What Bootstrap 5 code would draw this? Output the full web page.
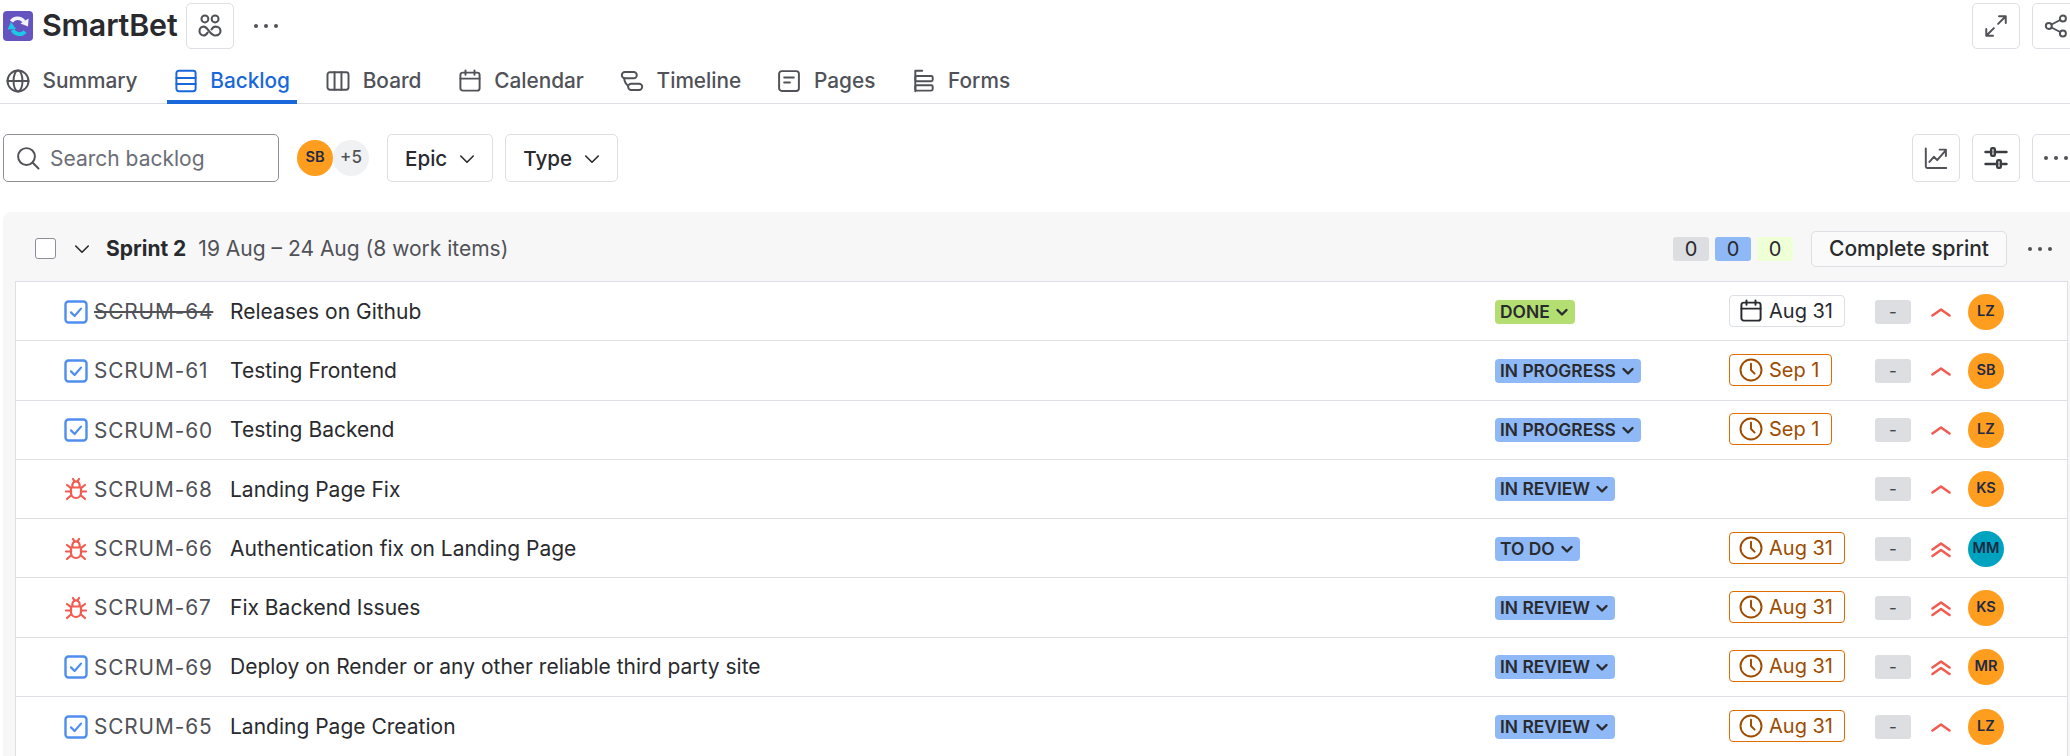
<!DOCTYPE html>
<html lang="en">
<head>
<meta charset="utf-8">
<title>SmartBet backlog</title>
<link href="https://cdn.jsdelivr.net/npm/bootstrap@5.3.0/dist/css/bootstrap.min.css" rel="stylesheet">
<script src="https://cdn.jsdelivr.net/npm/bootstrap@5.3.0/dist/js/bootstrap.bundle.min.js"></script>
<style>
html,body{height:756px;overflow:hidden}
body{font-family:Inter,"Liberation Sans",sans-serif;font-size:21px;color:#292a2e;background:#fff}
.ic{width:24px;height:24px;fill:none;stroke:currentColor;stroke-width:1.3;stroke-linecap:round;stroke-linejoin:round;flex:none}
.top-bar{height:52px;padding:3px 0 0 3px;margin-right:-10px}
.logo-box{width:30px;height:30px;margin:0 9px 0 0;flex:none}
.app-name{font-size:30.4px;font-weight:600;line-height:45px;letter-spacing:-.15px;margin-right:8px}
.sq-btn{width:48px;height:46px;padding:0;border:1.5px solid #dcdfe4;border-radius:5px;color:#505258;background:#fff;display:flex;align-items:center;justify-content:center}
.tall-btn{height:48px}
.dots{display:flex;gap:6px;align-items:center;justify-content:center}
.dots i{width:4px;height:4px;border-radius:50%;background:#505258;display:block}
.tab-strip{height:52px;border-bottom:1.5px solid #dcdfe4;padding-left:6px;gap:36.2px;align-items:flex-start}
.tab-item{display:flex;align-items:center;gap:12.5px;color:#505258;font-weight:500;font-size:20.8px;padding:10px 0 0;text-decoration:none;border-bottom:4px solid transparent;height:52px}
.tab-item.on{color:#1868db;border-bottom-color:#1868db;margin:0 -7px;padding:10px 7px 0}
.tool-row{padding:30px 0 0 3px;margin-right:-10px;height:108px;align-items:flex-start}
.search-box{width:276px;height:48px;border:1.5px solid #8c8f97;border-radius:5px;padding:0 12px;gap:10px;color:#505258}
.search-box input{border:0;padding:2px 0 0;font-size:21px;color:#505258;box-shadow:none;background:transparent}
.search-box input::placeholder{color:#6b6e76}
.av{width:36px;height:36px;border-radius:50%;background:#ff9d1f;color:#1f2a44;font-size:14.6px;font-weight:600;display:flex;align-items:center;justify-content:center;flex:none}
.av.teal{background:#00a3bf}
.av.more{background:#f0f1f2;color:#505258;font-size:17px;font-weight:500}
.drop-btn{height:48px;border:1.5px solid #dcdfe4;border-radius:5px;background:#fff;color:#292a2e;font-weight:500;font-size:20.6px;padding:2px 15px 0 17px;gap:10px;display:flex;align-items:center}
.people-gap{margin-left:18px;margin-top:6px}
.sprint-panel{background:#f7f7f7;margin-left:3px;border-radius:8px 0 0 0;padding:0 0 0 12px}
.sprint-head{height:69px;padding:4px 0 0 20px;align-items:center}
.tick{width:21px;height:21px;border:1.5px solid #8c8f97;border-radius:3px;background:#fff;flex:none}
.sprint-title{font-weight:700;font-size:21px;margin-left:14px}
.sprint-meta{color:#505258;font-size:21px;margin-left:12px}
.cnt{width:36px;height:24px;border-radius:3px;font-size:20px;font-weight:400;line-height:24px;text-align:center;color:#292a2e;padding:0}
.cnt.grey{background:#dddee1}.cnt.blue{background:#8fb8f6}.cnt.lime{background:#efffd6}
.finish-btn{height:36px;width:196px;border:1.5px solid #dcdfe4;border-radius:5px;background:#fafafa;font-weight:500;font-size:21px;padding:0;color:#292a2e;margin-left:18px}
.rows{border:1.5px solid #dcdfe4;border-radius:0;margin-right:2px;background:#fff}
.rows .list-group-item{height:59.25px;padding:1px 0 0 48px;border:0;border-bottom:1.5px solid #dcdfe4;border-radius:0;display:flex;align-items:center;color:#292a2e}
.rows .list-group-item:last-child{border-bottom:0}
.kind{width:24px;height:24px;margin-right:6px;flex:none}
.key{width:136px;color:#505258;letter-spacing:.9px;font-size:20.8px;white-space:nowrap;flex:none}
.key.gone{text-decoration:line-through}
.title-cell{width:1265px;font-size:21px;flex:none;white-space:nowrap}
.state{height:24px;border-radius:4px;font-size:17.4px;font-weight:600;color:#292a2e;padding:0 5px;align-items:center;gap:4px;white-space:nowrap}
.state.bl{background:#8fb8f6}.state.gr{background:#b3df72}
.state svg{width:16px;height:16px;fill:none;stroke:currentColor;stroke-width:2.400;stroke-linecap:round;stroke-linejoin:round}
.state-cell{width:234px;flex:none}
.due-cell{width:146px;flex:none}
.due{height:32px;align-items:center;gap:6px;border:1.5px solid #e06c00;border-radius:4px;color:#9e4c00;font-size:20px;padding:0 11px 0 9px;background:#fff;margin-top:-2px}
.due.calm{border-color:#dcdfe4;color:#292a2e}
.dash{width:36px;height:24px;background:#dddee1;border-radius:3px;text-align:center;line-height:24px;font-size:17px;color:#44464c;flex:none}
.prio{width:20px;height:20px;margin:0 17px 0 20px;color:#f15b50;fill:none;stroke:currentColor;stroke-width:2.5;flex:none}
</style>
</head>
<body>
<svg width="0" height="0" class="position-absolute">
<defs>
<symbol id="i-globe" viewBox="0 0 16 16"><circle cx="8" cy="8" r="7"/><ellipse cx="8" cy="8" rx="3" ry="7"/><path d="M1 8h14"/></symbol>
<symbol id="i-back" viewBox="0 0 16 16"><rect x="1.600" y="1.200" width="12.800" height="13.600" rx="1.600"/><path d="M1.600 6h12.800M1.600 10h12.800"/></symbol>
<symbol id="i-board" viewBox="0 0 16 16"><rect x="1" y="2.200" width="14" height="11.600" rx="1.600"/><path d="M5.700 2.200v11.600M10.300 2.200v11.600"/></symbol>
<symbol id="i-cal" viewBox="0 0 16 16"><rect x="1.600" y="2.400" width="12.800" height="12" rx="1.600"/><path d="M1.600 6.400h12.800M5 .9v3M11 .9v3"/></symbol>
<symbol id="i-time" viewBox="0 0 16 16"><rect x="1.200" y="2" width="10" height="4.200" rx="2.100"/><rect x="5.400" y="9.800" width="9.400" height="4.200" rx="2.100"/><path d="M2.800 6.200c0 2.200 1 3.600 2.600 5"/></symbol>
<symbol id="i-page" viewBox="0 0 16 16"><rect x="1.400" y="1.400" width="13.200" height="13.200" rx="1.800"/><path d="M4.800 5.600h6.400M4.800 9h3.800"/></symbol>
<symbol id="i-form" viewBox="0 0 16 16"><path d="M2.200 1.200h4.600M2.200 1.200v13.600"/><rect x="2.200" y="4.600" width="11.600" height="3.600" rx="1"/><rect x="2.200" y="10.800" width="11.600" height="3.600" rx="1"/></symbol>
<symbol id="i-people" viewBox="0 0 16 16"><circle cx="4.600" cy="3.300" r="2.300"/><circle cx="11.400" cy="3.300" r="2.300"/><path stroke-width="1.400" d="M6.400 12.400c-.6 1-1.400 1.900-2.700 1.900A2.800 2.800 0 0 1 1 11.400c0-1.800 1.300-3 2.800-3 2.900 0 4 5.900 7.800 5.900 2 0 3.400-1.300 3.400-2.900 0-1.800-1.400-3-3.200-3-1.400 0-2.200.9-2.800 1.900"/></symbol>
<symbol id="i-expand" viewBox="0 0 16 16"><path d="M9.400 6.600 14.500 1.500M10 1.500h4.500V6M6.600 9.400 1.500 14.500M1.500 10v4.500H6"/></symbol>
<symbol id="i-share" viewBox="0 0 16 16"><circle cx="12.600" cy="3" r="2"/><circle cx="12.600" cy="13" r="2"/><circle cx="3.200" cy="8" r="2"/><path d="M5 7 10.800 4M5 9l5.800 3"/></symbol>
<symbol id="i-chart" viewBox="0 0 16 16"><path d="M1.200 1.600v12c0 .7.4 1 1 1h12.600M3.600 10.600l3-3.400 2.200 2.200 5.400-6.200M10.400 2.400h4.200v4.200"/></symbol>
<symbol id="i-slide" viewBox="0 0 16 16"><g stroke="#3a3c42" stroke-width="1.600"><rect x="4.800" y="1.400" width="2.400" height="5.200" rx=".8"/><rect x="8.800" y="9.400" width="2.400" height="5.200" rx=".8"/><path d="M1 4h3.800M7.200 4H15M1 12h7.800M11.200 12H15"/></g></symbol>
<symbol id="i-find" viewBox="0 0 16 16"><circle cx="7" cy="7" r="5.600"/><path d="m11.200 11.200 3.800 3.800"/></symbol>
<symbol id="i-down" viewBox="0 0 16 16"><path d="m3 5.600 5 5 5-5"/></symbol>
<symbol id="i-clock" viewBox="0 0 16 16"><circle cx="8" cy="8" r="7"/><path d="M8 3.800V8l2.400 2.400"/></symbol>
<symbol id="i-task" viewBox="0 0 24 24"><rect x="1.500" y="1.500" width="21" height="21" rx="3" fill="#fff" stroke="#4f8eef" stroke-width="2.400"/><path d="m7 12.400 3.600 3.600 6.400-7.400" fill="none" stroke="#4f8eef" stroke-width="2.200" stroke-linecap="round" stroke-linejoin="round"/></symbol>
<symbol id="i-bug" viewBox="0 0 24 24"><g fill="none" stroke="#f15b50" stroke-width="2.200" stroke-linecap="round" stroke-linejoin="round"><path d="M7 10.500h10v5.500a5 5 0 0 1-10 0zM8.400 10.500V8a3.600 3.600 0 0 1 7.200 0v2.500M9 2l1.800 2.800M15 2l-1.800 2.800M3 8l4 3.200M21 8l-4 3.200M2 14.500h5M22 14.500h-5M3 22l4.500-4M21 22l-4.500-4"/></g></symbol>
<symbol id="i-up1" viewBox="0 0 20 20"><path d="m1.500 13.500 8.500-6 8.500 6" stroke-linecap="round" stroke-linejoin="round"/></symbol>
<symbol id="i-up2" viewBox="0 0 20 20"><path d="m1.500 10.500 8.500-6 8.500 6M1.500 17l8.500-6 8.500 6" stroke-linecap="round" stroke-linejoin="round"/></symbol>
<symbol id="i-chev" viewBox="0 0 16 16"><path d="m3.500 6 4.500 4.500L12.500 6"/></symbol>
</defs>
</svg>

<header class="top-bar d-flex align-items-start">
  <svg class="logo-box mt-2" viewBox="0 0 30 30" role="img" aria-label="SmartBet logo"><rect width="30" height="30" rx="4" fill="#6554c0"/><path d="M8.500 10.500C11 6.500 17.500 6 21 10.500" fill="none" stroke="#f2f2fb" stroke-width="3.600"/><path d="m17.500 12.500 7.500 3 .5-8z" fill="#f2f2fb"/><path d="M22 20.500C19 24.500 12.500 24 9.500 19" fill="none" stroke="#1cc8e3" stroke-width="3.800"/><path d="m4.500 18.500 8.500-.5-5-7z" fill="#1cc8e3"/></svg>
  <span class="app-name">SmartBet</span>
  <button class="sq-btn" type="button" aria-label="People"><svg class="ic"><use href="#i-people"/></svg></button>
  <button class="sq-btn border-0 bg-transparent ms-2" type="button" aria-label="More"><span class="dots"><i></i><i></i><i></i></span></button>
  <button class="sq-btn ms-auto" type="button" aria-label="Expand"><svg class="ic"><use href="#i-expand"/></svg></button>
  <button class="sq-btn" type="button" style="margin-left:12px" aria-label="Share"><svg class="ic"><use href="#i-share"/></svg></button>
</header>

<nav class="nav tab-strip flex-nowrap">
  <a class="tab-item" href="#"><svg class="ic"><use href="#i-globe"/></svg>Summary</a>
  <a class="tab-item on" href="#"><svg class="ic"><use href="#i-back"/></svg>Backlog</a>
  <a class="tab-item" href="#"><svg class="ic"><use href="#i-board"/></svg>Board</a>
  <a class="tab-item" href="#"><svg class="ic"><use href="#i-cal"/></svg>Calendar</a>
  <a class="tab-item" href="#"><svg class="ic"><use href="#i-time"/></svg>Timeline</a>
  <a class="tab-item" href="#"><svg class="ic"><use href="#i-page"/></svg>Pages</a>
  <a class="tab-item" href="#"><svg class="ic"><use href="#i-form"/></svg>Forms</a>
</nav>

<div class="tool-row d-flex">
  <div class="search-box d-flex align-items-center"><svg class="ic"><use href="#i-find"/></svg><input class="form-control" type="text" placeholder="Search backlog" aria-label="Search backlog"></div>
  <div class="d-flex people-gap"><span class="av">SB</span><span class="av more">+5</span></div>
  <button class="drop-btn" type="button" style="margin-left:18px">Epic<svg class="ic" style="width:20px;height:20px"><use href="#i-down"/></svg></button>
  <button class="drop-btn" type="button" style="margin-left:12px">Type<svg class="ic" style="width:20px;height:20px"><use href="#i-down"/></svg></button>
  <button class="sq-btn tall-btn ms-auto" type="button" aria-label="Insights"><svg class="ic"><use href="#i-chart"/></svg></button>
  <button class="sq-btn tall-btn" type="button" style="margin-left:12px" aria-label="Settings"><svg class="ic"><use href="#i-slide"/></svg></button>
  <button class="sq-btn tall-btn" type="button" style="margin-left:12px" aria-label="More"><span class="dots"><i></i><i></i><i></i></span></button>
</div>

<section class="sprint-panel">
  <div class="sprint-head d-flex">
    <span class="tick"></span>
    <svg class="ic ms-3" style="width:20px;height:20px;color:#292a2e"><use href="#i-down"/></svg>
    <span class="sprint-title">Sprint 2</span>
    <span class="sprint-meta">19 Aug – 24 Aug (8 work items)</span>
    <span class="badge cnt grey ms-auto">0</span>
    <span class="badge cnt blue" style="margin-left:6px">0</span>
    <span class="badge cnt lime" style="margin-left:6px">0</span>
    <button class="finish-btn" type="button">Complete sprint</button>
    <span class="dots" style="margin:0 18px 0 21px"><i></i><i></i><i></i></span>
  </div>
  <div class="list-group rows">
    <div class="list-group-item"><svg class="kind"><use href="#i-task"/></svg><span class="key gone">SCRUM-64</span><span class="title-cell">Releases on Github</span><span class="state-cell d-flex"><span class="state gr d-flex">DONE<svg><use href="#i-chev"/></svg></span></span><span class="due-cell d-flex"><span class="due calm d-flex"><svg class="ic"><use href="#i-cal"/></svg>Aug 31</span></span><span class="dash">-</span><svg class="prio"><use href="#i-up1"/></svg><span class="av">LZ</span></div>
    <div class="list-group-item"><svg class="kind"><use href="#i-task"/></svg><span class="key">SCRUM-61</span><span class="title-cell">Testing Frontend</span><span class="state-cell d-flex"><span class="state bl d-flex">IN PROGRESS<svg><use href="#i-chev"/></svg></span></span><span class="due-cell d-flex"><span class="due d-flex"><svg class="ic"><use href="#i-clock"/></svg>Sep 1</span></span><span class="dash">-</span><svg class="prio"><use href="#i-up1"/></svg><span class="av">SB</span></div>
    <div class="list-group-item"><svg class="kind"><use href="#i-task"/></svg><span class="key">SCRUM-60</span><span class="title-cell">Testing Backend</span><span class="state-cell d-flex"><span class="state bl d-flex">IN PROGRESS<svg><use href="#i-chev"/></svg></span></span><span class="due-cell d-flex"><span class="due d-flex"><svg class="ic"><use href="#i-clock"/></svg>Sep 1</span></span><span class="dash">-</span><svg class="prio"><use href="#i-up1"/></svg><span class="av">LZ</span></div>
    <div class="list-group-item"><svg class="kind"><use href="#i-bug"/></svg><span class="key">SCRUM-68</span><span class="title-cell">Landing Page Fix</span><span class="state-cell d-flex"><span class="state bl d-flex">IN REVIEW<svg><use href="#i-chev"/></svg></span></span><span class="due-cell d-flex"></span><span class="dash">-</span><svg class="prio"><use href="#i-up1"/></svg><span class="av">KS</span></div>
    <div class="list-group-item"><svg class="kind"><use href="#i-bug"/></svg><span class="key">SCRUM-66</span><span class="title-cell">Authentication fix on Landing Page</span><span class="state-cell d-flex"><span class="state bl d-flex">TO DO<svg><use href="#i-chev"/></svg></span></span><span class="due-cell d-flex"><span class="due d-flex"><svg class="ic"><use href="#i-clock"/></svg>Aug 31</span></span><span class="dash">-</span><svg class="prio"><use href="#i-up2"/></svg><span class="av teal">MM</span></div>
    <div class="list-group-item"><svg class="kind"><use href="#i-bug"/></svg><span class="key">SCRUM-67</span><span class="title-cell">Fix Backend Issues</span><span class="state-cell d-flex"><span class="state bl d-flex">IN REVIEW<svg><use href="#i-chev"/></svg></span></span><span class="due-cell d-flex"><span class="due d-flex"><svg class="ic"><use href="#i-clock"/></svg>Aug 31</span></span><span class="dash">-</span><svg class="prio"><use href="#i-up2"/></svg><span class="av">KS</span></div>
    <div class="list-group-item"><svg class="kind"><use href="#i-task"/></svg><span class="key">SCRUM-69</span><span class="title-cell">Deploy on Render or any other reliable third party site</span><span class="state-cell d-flex"><span class="state bl d-flex">IN REVIEW<svg><use href="#i-chev"/></svg></span></span><span class="due-cell d-flex"><span class="due d-flex"><svg class="ic"><use href="#i-clock"/></svg>Aug 31</span></span><span class="dash">-</span><svg class="prio"><use href="#i-up2"/></svg><span class="av">MR</span></div>
    <div class="list-group-item"><svg class="kind"><use href="#i-task"/></svg><span class="key">SCRUM-65</span><span class="title-cell">Landing Page Creation</span><span class="state-cell d-flex"><span class="state bl d-flex">IN REVIEW<svg><use href="#i-chev"/></svg></span></span><span class="due-cell d-flex"><span class="due d-flex"><svg class="ic"><use href="#i-clock"/></svg>Aug 31</span></span><span class="dash">-</span><svg class="prio"><use href="#i-up1"/></svg><span class="av">LZ</span></div>
  </div>
</section>
</body>
</html>
